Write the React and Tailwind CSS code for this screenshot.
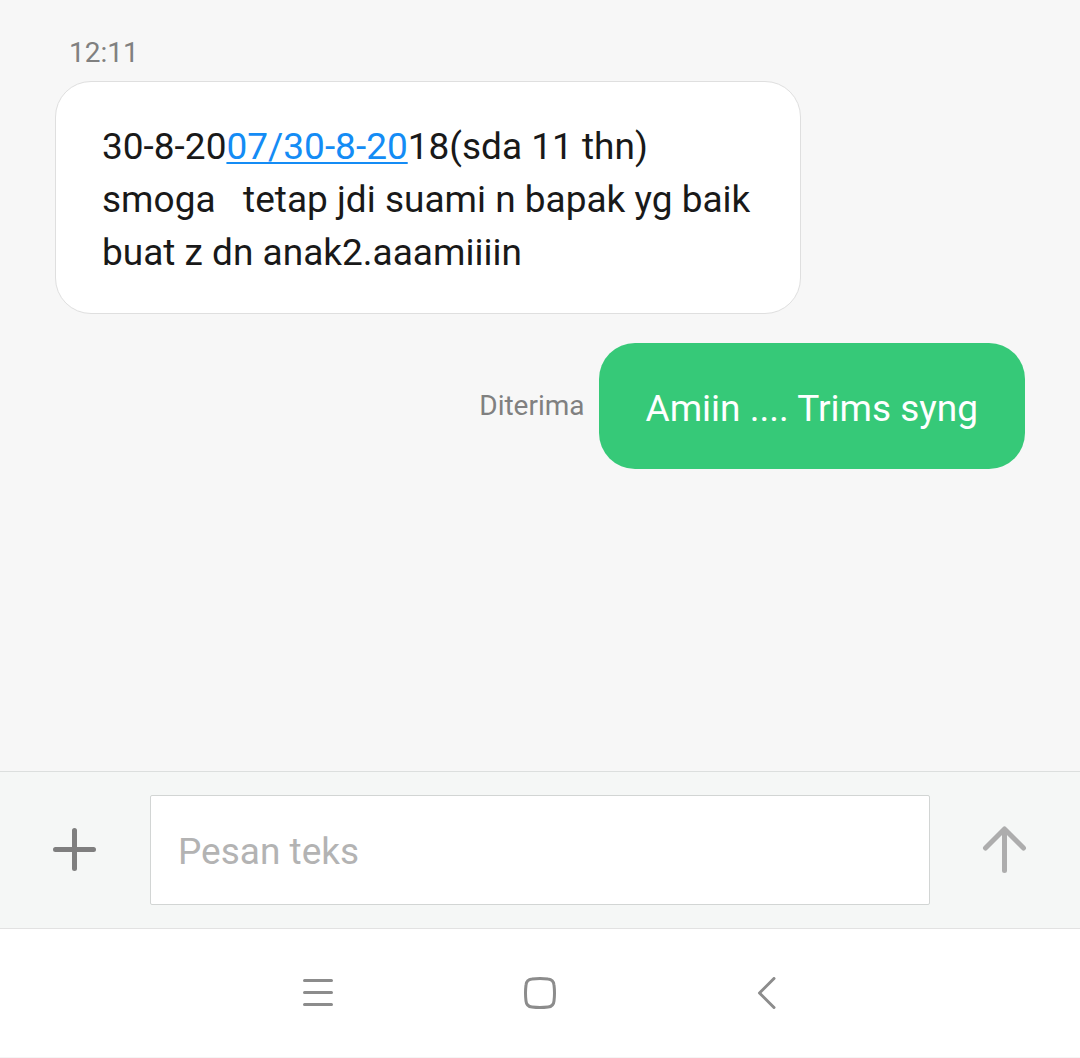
import { useState } from "react";

const PlusIcon = () => (
  <svg className="w-12 h-12" viewBox="0 0 48 48" fill="none" aria-hidden="true">
    <path
      d="M23.5 4.5v38M4.500 23.5h38"
      stroke="#7f7f7f"
      strokeWidth="5"
      strokeLinecap="round"
    />
  </svg>
);

const SendIcon = () => (
  <svg className="w-12 h-12" viewBox="0 0 48 48" fill="none" aria-hidden="true">
    <path
      d="M4.500 22L23.5 3L42.5 22M23.5 4V44.5"
      stroke="#adadad"
      strokeWidth="5"
      strokeLinecap="round"
      strokeLinejoin="round"
    />
  </svg>
);

const MenuIcon = () => (
  <svg className="w-8 h-8" viewBox="0 0 32 32" fill="none" aria-hidden="true">
    <path
      d="M2.5 3.5h27M2.5 15.5h27M2.5 27.5h27"
      stroke="#8c8c8c"
      strokeWidth="3"
      strokeLinecap="round"
    />
  </svg>
);

const HomeIcon = () => (
  <svg className="w-8 h-8" viewBox="0 0 32 32" fill="none" aria-hidden="true">
    <path
      d="M8 2Q16 1 24 2Q29.500 2.500 30 8Q31 16 30 24Q29.500 29.500 24 30Q16 31 8 30Q2.500 29.500 2 24Q1 16 2 8Q2.500 2.500 8 2Z"
      stroke="#8c8c8c"
      strokeWidth="3"
    />
  </svg>
);

const BackIcon = () => (
  <svg className="w-8 h-8" viewBox="0 0 32 32" fill="none" aria-hidden="true">
    <path
      d="M28 1.500L13.500 16L28 30.500"
      stroke="#8c8c8c"
      strokeWidth="3"
      strokeLinecap="round"
      strokeLinejoin="round"
    />
  </svg>
);

const navItems = [
  { label: "Menu", icon: MenuIcon },
  { label: "Beranda", icon: HomeIcon },
  { label: "Kembali", icon: BackIcon },
];

const App = () => {
  const [message, setMessage] = useState("");

  return (
    <div className="flex flex-col min-h-screen bg-[#f7f7f7] font-[Roboto,sans-serif]">
      {/* Conversation */}
      <main className="flex-1 flex flex-col px-[55px] pt-[33px]">
        <time className="pl-[14px] text-[28px] leading-10 text-[#808080]">
          12:11
        </time>

        <div className="self-start mt-2 pl-[46px] pr-[50px] pt-[38px] pb-[34px] rounded-[36px] border border-[#dfdfdf] bg-white">
          <p className="text-[37px] leading-[53px] text-[#191919]">
            30-8-20
            <a
              href="tel:0730820"
              className="text-[#148cf5] underline decoration-2 underline-offset-[3px] [text-decoration-skip-ink:none]"
            >
              07/30-8-20
            </a>
            18(sda 11 thn)
            <br />
            smoga&nbsp;&nbsp; tetap jdi suami n bapak yg baik
            <br />
            buat z dn anak2.aaamiiiin
          </p>
        </div>

        <div className="flex items-center justify-end gap-[14px] mt-[29px]">
          <span className="text-[28px] leading-10 text-[#808080]">
            Diterima
          </span>
          <p className="px-[47px] pt-[39px] pb-[34px] rounded-[36px] bg-[#36c978] text-[37px] leading-[53px] text-white">
            Amiin .... Trims syng
          </p>
        </div>
      </main>

      {/* Compose bar */}
      <form
        className="flex items-center py-[23px] border-t border-[#dcdfde] bg-[#f5f7f6]"
        onSubmit={(e) => {
          e.preventDefault();
          setMessage("");
        }}
      >
        <button
          type="button"
          aria-label="Tambah lampiran"
          className="flex justify-center w-[150px]"
        >
          <PlusIcon />
        </button>
        <input
          type="text"
          aria-label="Pesan teks"
          placeholder="Pesan teks"
          value={message}
          onChange={(e) => setMessage(e.target.value)}
          className="flex-1 min-w-0 h-[110px] px-[27px] pt-[2px] border border-[#d2d5d4] rounded-xs bg-white text-[37px] text-[#191919] placeholder:text-[#b3b3b3] outline-none"
        />
        <button
          type="submit"
          aria-label="Kirim"
          className="flex justify-center w-[150px]"
        >
          <SendIcon />
        </button>
      </form>

      {/* System navigation */}
      <nav className="flex justify-center items-center h-[130px] border-t border-b border-t-[#e2e2e2] border-b-[#f5f5f5] bg-white">
        {navItems.map(({ label, icon: Icon }) => (
          <button
            key={label}
            type="button"
            aria-label={label}
            className="flex justify-center w-[222px] py-6"
          >
            <Icon />
          </button>
        ))}
      </nav>
    </div>
  );
};

export default App;
